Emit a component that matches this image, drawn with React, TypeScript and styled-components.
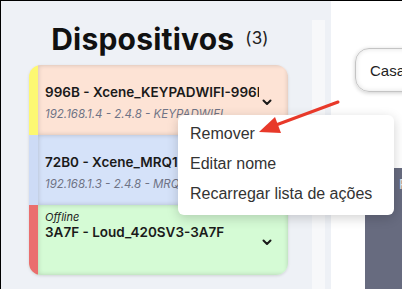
import React from 'react'
import styled, { createGlobalStyle } from 'styled-components'

const Global = createGlobalStyle`
  html, body { margin: 0; padding: 0; }
  body { font-family: Inter, "Noto Sans", sans-serif; overflow: hidden; }
`

const devices = [
  { status: '', name: '996B - Xcene_KEYPADWIFI-996B', info: '192.168.1.4 - 2.4.8 - KEYPADWIFI', bg: '#fde3d5', stripe: '#fdf872' },
  { status: '', name: '72B0 - Xcene_MRQ1-72B0', info: '192.168.1.3 - 2.4.8 - MRQ1', bg: '#d5e2f9', stripe: '#cddbf6' },
  { status: 'Offline', name: '3A7F - Loud_420SV3-3A7F', info: '', bg: '#d5fbd5', stripe: '#ea6e6e' },
]

const Chevron = () => (
  <ChevronIcon viewBox="0 0 10 7" width="10" height="7">
    <path d="M1.5 1.5 L5 5 L8.5 1.5" fill="none" stroke="#1a1a1a" strokeWidth="2" strokeLinecap="round" strokeLinejoin="round" />
  </ChevronIcon>
)

const App = () => {
  return (
    <Screen>
      <Global />
      <Sidebar>
        <Column>
          <Title>
            Dispositivos<Count>(3)</Count>
          </Title>
          <List>
            {devices.map((d) => (
              <Card key={d.name} $bg={d.bg} $stripe={d.stripe}>
                <Info>
                  <Status>{d.status}</Status>
                  <Name>{d.name}</Name>
                  {d.info && <Sub>{d.info}</Sub>}
                </Info>
                <Chevron />
              </Card>
            ))}
          </List>
        </Column>
        <Track />
      </Sidebar>
      <Main>
        <Select>Casa</Select>
        <Panel>F</Panel>
      </Main>
      <Menu>
        <Item>Remover</Item>
        <Item>Editar nome</Item>
        <Item>Recarregar lista de ações</Item>
      </Menu>
      <Arrow width="402" height="289" viewBox="0 0 402 289">
        <line x1="338" y1="102" x2="276" y2="125" stroke="#e8392a" strokeWidth="3" strokeLinecap="round" />
        <polygon points="259,132 281,133 275,117" fill="#e8392a" />
      </Arrow>
    </Screen>
  )
}

export default App

const Screen = styled.div`
  position: relative;
  display: flex;
  height: 289px;
  box-sizing: border-box;
  border-top: 1px solid #000;
  border-left: 1px solid #000;
  overflow: hidden;
  background: #fff;
`
const Sidebar = styled.div`
  width: 330px;
  flex-shrink: 0;
  display: flex;
  background: #eef1f6;
  padding-left: 28px;
  box-sizing: border-box;
`
const Column = styled.div`
  width: 259px;
  display: flex;
  flex-direction: column;
`
const Title = styled.h1`
  margin: 20px 0 8px;
  height: 36px;
  display: flex;
  justify-content: center;
  align-items: baseline;
  font-size: 30px;
  line-height: 36px;
  font-weight: 700;
  color: #111;
  letter-spacing: 0.2px;
  padding-left: 3px;
`
const Count = styled.span`
  margin-left: 11px;
  font-size: 17px;
  line-height: 17px;
  font-weight: 400;
  color: #222;
  position: relative;
  top: -6px;
`
const List = styled.div`
  display: flex;
  flex-direction: column;
  border-radius: 12px;
  overflow: hidden;
  box-shadow: 0 1px 3px rgba(0, 0, 0, 0.12);
`
const Card = styled.div<{ $bg: string; $stripe: string }>`
  display: flex;
  height: 70px;
  box-sizing: border-box;
  background: ${(p) => p.$bg};
  border-left: 9px solid ${(p) => p.$stripe};
  padding: 5px 16px 0 7px;
  box-shadow: inset 0 0 5px rgba(0, 0, 0, 0.18);
`
const Info = styled.div`
  flex: 1;
  min-width: 0;
  overflow: hidden;
  white-space: nowrap;
  display: flex;
  flex-direction: column;
`
const Status = styled.div`
  height: 14px;
  font-size: 11px;
  line-height: 14px;
  font-style: italic;
  color: #222;
`
const Name = styled.div`
  font-size: 13.5px;
  line-height: 16px;
  font-weight: 600;
  color: #1a1a1a;
`
const Sub = styled.div`
  margin-top: 6px;
  font-size: 11.5px;
  line-height: 16px;
  font-style: italic;
  color: #6f7385;
`
const ChevronIcon = styled.svg`
  align-self: center;
  margin: 0 0 0 3px;
  flex-shrink: 0;
`
const Track = styled.div`
  width: 13px;
  margin: 19px 0 0 24px;
  background: #f7f8fa;
`
const Main = styled.div`
  flex: 1;
  min-width: 0;
  display: flex;
  flex-direction: column;
  padding: 47px 0 0 24px;
`
const Select = styled.div`
  height: 44px;
  width: 120px;
  box-sizing: border-box;
  display: flex;
  align-items: center;
  padding-left: 14px;
  border: 1px solid #c4c4c4;
  border-radius: 14px;
  box-shadow: 0 1px 4px rgba(0, 0, 0, 0.2), inset 0 0 5px rgba(0, 0, 0, 0.12);
  font-family: "Liberation Sans", Arial, sans-serif;
  font-size: 15px;
  color: #222;
`
const Panel = styled.div`
  flex: 1;
  margin: 76px 0 0 10px;
  width: 100px;
  background: #676b7f;
  padding: 8px 0 0 34px;
  box-sizing: border-box;
  color: #e6e6ea;
  font-family: "Liberation Sans", Arial, sans-serif;
  font-size: 14px;
`
const Menu = styled.div`
  position: absolute;
  left: 177px;
  top: 114px;
  width: 216px;
  padding: 4px 0 6px;
  background: #fff;
  border-radius: 6px;
  box-shadow: 0 3px 12px rgba(0, 0, 0, 0.18);
`
const Item = styled.div`
  height: 30px;
  display: flex;
  align-items: center;
  padding-left: 12px;
  font-family: "Liberation Sans", Arial, sans-serif;
  font-size: 16px;
  color: #333;
`
const Arrow = styled.svg`
  position: absolute;
  left: -1px;
  top: -1px;
  pointer-events: none;
`
